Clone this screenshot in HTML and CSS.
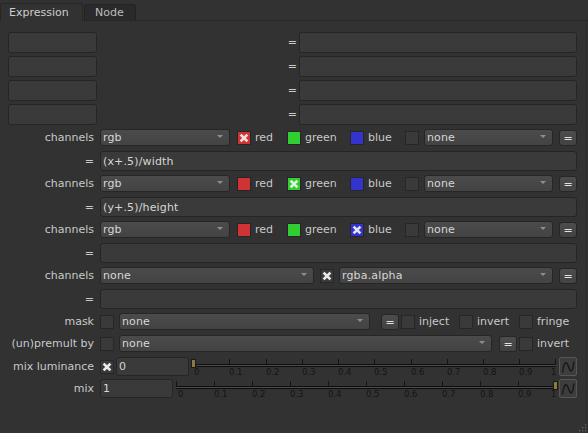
FILE: index.html
```html
<!DOCTYPE html>
<html>
<head>
<meta charset="utf-8">
<link rel="stylesheet" href="styles.css">
</head>
<body>
<div class="tabbar">
  <div class="tab active">Expression</div>
  <div class="tab">Node</div>
</div>
<div class="panel">
  <div class="r4"><div class="fld fs"></div><span class="sp"></span><span class="eq2">=</span><div class="fld fl"></div></div>
  <div class="r4"><div class="fld fs"></div><span class="sp"></span><span class="eq2">=</span><div class="fld fl"></div></div>
  <div class="r4"><div class="fld fs"></div><span class="sp"></span><span class="eq2">=</span><div class="fld fl"></div></div>
  <div class="r4"><div class="fld fs"></div><span class="sp"></span><span class="eq2">=</span><div class="fld fl"></div></div>

  <div class="rc">
    <span class="lbl">channels</span>
    <div class="dd w130">rgb</div>
    <div class="opt ml7 w50"><span class="cb red"><svg viewBox="0 0 12 12"><path d="M2.6 2.6L9.4 9.4M9.4 2.6L2.6 9.4"/></svg></span><span class="t">red</span></div>
    <div class="opt w63"><span class="cb green"></span><span class="t">green</span></div>
    <div class="opt w55"><span class="cb blue"></span><span class="t">blue</span></div>
    <span class="cb"></span>
    <div class="dd ml5 w129">none</div>
    <div class="btn ml6">=</div>
  </div>
  <div class="re"><span class="lbl">=</span><div class="fld grow">(x+.5)/width</div></div>

  <div class="rc">
    <span class="lbl">channels</span>
    <div class="dd w130">rgb</div>
    <div class="opt ml7 w50"><span class="cb red"></span><span class="t">red</span></div>
    <div class="opt w63"><span class="cb green"><svg viewBox="0 0 12 12"><path d="M2.6 2.6L9.4 9.4M9.4 2.6L2.6 9.4"/></svg></span><span class="t">green</span></div>
    <div class="opt w55"><span class="cb blue"></span><span class="t">blue</span></div>
    <span class="cb"></span>
    <div class="dd ml5 w129">none</div>
    <div class="btn ml6">=</div>
  </div>
  <div class="re"><span class="lbl">=</span><div class="fld grow">(y+.5)/height</div></div>

  <div class="rc">
    <span class="lbl">channels</span>
    <div class="dd w130">rgb</div>
    <div class="opt ml7 w50"><span class="cb red"></span><span class="t">red</span></div>
    <div class="opt w63"><span class="cb green"></span><span class="t">green</span></div>
    <div class="opt w55"><span class="cb blue"><svg viewBox="0 0 12 12"><path d="M2.6 2.6L9.4 9.4M9.4 2.6L2.6 9.4"/></svg></span><span class="t">blue</span></div>
    <span class="cb"></span>
    <div class="dd ml5 w129">none</div>
    <div class="btn ml6">=</div>
  </div>
  <div class="re"><span class="lbl">=</span><div class="fld grow"></div></div>

  <div class="rc">
    <span class="lbl">channels</span>
    <div class="dd w214">none</div>
    <span class="cb ml6"><svg viewBox="0 0 12 12"><path d="M2.6 2.6L9.4 9.4M9.4 2.6L2.6 9.4"/></svg></span>
    <div class="dd ml5 w214">rgba.alpha</div>
    <div class="btn ml6">=</div>
  </div>
  <div class="re"><span class="lbl">=</span><div class="fld grow"></div></div>

  <div class="rc">
    <span class="lbl">mask</span>
    <span class="cb"></span>
    <div class="dd ml5 w251">none</div>
    <div class="btn ml11">=</div>
    <div class="opt ml2 w58"><span class="cb"></span><span class="t">inject</span></div>
    <div class="opt w60"><span class="cb"></span><span class="t">invert</span></div>
    <div class="opt"><span class="cb"></span><span class="t">fringe</span></div>
  </div>

  <div class="rc">
    <span class="lbl">(un)premult by</span>
    <span class="cb"></span>
    <div class="dd ml5 w373">none</div>
    <div class="btn ml7">=</div>
    <div class="opt ml2"><span class="cb"></span><span class="t">invert</span></div>
  </div>

  <div class="rm">
    <span class="lbl">mix luminance</span>
    <span class="cb"><svg viewBox="0 0 12 12"><path d="M2.6 2.6L9.4 9.4M9.4 2.6L2.6 9.4"/></svg></span>
    <div class="fld num ml2">0</div>
    <div class="sl w370">
      <div class="trk" style="left:4px;width:363px"></div>
      <span class="tk" style="left:40px"></span><span class="tk" style="left:77px"></span><span class="tk" style="left:113px"></span><span class="tk" style="left:149px"></span><span class="tk" style="left:185px"></span><span class="tk" style="left:222px"></span><span class="tk" style="left:258px"></span><span class="tk" style="left:294px"></span><span class="tk" style="left:330px"></span><span class="tk" style="left:366px"></span>
      <span class="tl" style="left:5px">0</span><span class="tl" style="left:40px">0.1</span><span class="tl" style="left:77px">0.2</span><span class="tl" style="left:113px">0.3</span><span class="tl" style="left:149px">0.4</span><span class="tl" style="left:185px">0.5</span><span class="tl" style="left:222px">0.6</span><span class="tl" style="left:258px">0.7</span><span class="tl" style="left:294px">0.8</span><span class="tl" style="left:330px">0.9</span><span class="tl" style="left:362px">1</span>
      <span class="hd" style="left:2px"></span>
    </div>
    <div class="cv"><svg viewBox="0 0 16 17"><path d="M2.5 14.5C3.5 7 5 3 7 5.5C8.2 7 8.8 10 10 12C11.5 14.5 13 12 13.8 3.5"/></svg></div>
  </div>

  <div class="rm">
    <span class="lbl">mix</span>
    <div class="fld num">1</div>
    <div class="sl w386">
      <div class="trk" style="left:3px;width:381px"></div>
      <span class="tk" style="left:3px"></span><span class="tk" style="left:41px"></span><span class="tk" style="left:79px"></span><span class="tk" style="left:117px"></span><span class="tk" style="left:155px"></span><span class="tk" style="left:193px"></span><span class="tk" style="left:231px"></span><span class="tk" style="left:269px"></span><span class="tk" style="left:307px"></span><span class="tk" style="left:345px"></span>
      <span class="tl" style="left:5px">0</span><span class="tl" style="left:41px">0.1</span><span class="tl" style="left:79px">0.2</span><span class="tl" style="left:117px">0.3</span><span class="tl" style="left:155px">0.4</span><span class="tl" style="left:193px">0.5</span><span class="tl" style="left:231px">0.6</span><span class="tl" style="left:269px">0.7</span><span class="tl" style="left:307px">0.8</span><span class="tl" style="left:345px">0.9</span><span class="tl" style="left:378px">1</span>
      <span class="hd" style="left:380px"></span>
    </div>
    <div class="cv"><svg viewBox="0 0 16 17"><path d="M2.5 14.5C3.5 7 5 3 7 5.5C8.2 7 8.8 10 10 12C11.5 14.5 13 12 13.8 3.5"/></svg></div>
  </div>
</div>
<svg class="grip" viewBox="0 0 8 8"><rect x="6" y="0" width="1.4" height="1.4"/><rect x="6" y="3" width="1.4" height="1.4"/><rect x="3" y="3" width="1.4" height="1.4"/><rect x="6" y="6" width="1.4" height="1.4"/><rect x="3" y="6" width="1.4" height="1.4"/><rect x="0" y="6" width="1.4" height="1.4"/></svg>
</body>
</html>
```
FILE: styles.css
```css
* { box-sizing: border-box; }
html, body { margin: 0; padding: 0; }
body {
  width: 588px;
  height: 433px;
  overflow: hidden;
  position: relative;
  background: #323232;
  font-family: "DejaVu Sans", "Liberation Sans", sans-serif;
  font-size: 11px;
  color: #c9c9c9;
}

.tabbar {
  height: 21px;
  display: flex;
  align-items: flex-end;
  border-bottom: 1px solid #272727;
  background: #323232;
}
.tab {
  height: 16px;
  width: 52px;
  margin-left: 1px;
  padding: 1px 0 0 10px;
  line-height: 14px;
  background: #2a2a2a;
  border: 1px solid #232323;
  border-bottom: none;
  border-radius: 3px 3px 0 0;
  color: #bcbcbc;
  white-space: nowrap;
}
.tab.active {
  width: 83px;
  height: 18px;
  margin: 0 0 -1px 0;
  padding: 0 0 0 8px;
  line-height: 17px;
  background: #323232;
  border-color: #262626;
  color: #cdcdcd;
}

.panel {
  width: 587px;
  height: 412px;
  border-right: 1px solid #2a2a2a;
  padding: 9px 9px 0 8px;
  display: flex;
  flex-direction: column;
}

.r4 { display: flex; height: 21px; margin: 2px 0 1px; flex: none; }
.rc { display: flex; align-items: center; height: 17px; margin: 3px 0 2px; flex: none; }
.re { display: flex; align-items: center; height: 20px; margin: 3px 0 1px; flex: none; }
.rm { display: flex; align-items: center; height: 19px; margin: 3px 0 0; flex: none; }

.lbl {
  width: 86px;
  margin-right: 6px;
  text-align: right;
  white-space: nowrap;
  flex: none;
}

.fld {
  background: #3a3a3a;
  border: 1px solid #252525;
  border-radius: 3px;
  color: #d6d6d6;
  padding-left: 2px;
  display: flex;
  align-items: center;
  white-space: nowrap;
  flex: none;
  letter-spacing: 0.15px;
}
.fs { width: 89px; height: 21px; }
.fl { width: 278px; height: 21px; }
.grow { flex: 1; height: 20px; }
.num { width: 73px; height: 19px; }
.sp { flex: 1; }
.eq2 { align-self: center; margin-right: 2px; }

.dd {
  height: 17px;
  display: flex;
  align-items: center;
  padding-left: 2px;
  border: 1px solid #262626;
  border-radius: 3px;
  background: linear-gradient(#4b4b4b, #434343);
  color: #d6d6d6;
  white-space: nowrap;
  flex: none;
  letter-spacing: 0.15px;
}
.dd::after {
  content: "";
  margin-left: auto;
  margin-right: 6px;
  margin-top: -2px;
  border-left: 3px solid transparent;
  border-right: 3px solid transparent;
  border-top: 3px solid #8e8e8e;
}

.btn {
  width: 18px;
  height: 16px;
  border: 1px solid #262626;
  border-radius: 3px;
  background: linear-gradient(#4d4d4d, #424242);
  color: #e2e2e2;
  display: flex;
  align-items: center;
  justify-content: center;
  line-height: 1;
  padding-top: 1px;
  flex: none;
}

.cb {
  width: 14px;
  height: 14px;
  border: 1px solid #262626;
  background: #3a3a3a;
  flex: none;
  display: block;
}
.cb svg { display: block; width: 12px; height: 12px; }
.cb path { stroke: #e9e9e9; stroke-width: 2.7; fill: none; }
.cb.red { background: #cf3333; }
.cb.green { background: #32cd32; }
.cb.blue { background: #3434cc; }
.cb.red path { stroke: #f0dede; }
.cb.green path { stroke: #dff3df; }
.cb.blue path { stroke: #e2e2f6; }

.opt { display: flex; align-items: center; flex: none; white-space: nowrap; }
.opt .t { margin-left: 4px; }

.w50 { width: 50px; }
.w55 { width: 55px; }
.w58 { width: 58px; }
.w60 { width: 60px; }
.w63 { width: 63px; }
.w129 { width: 129px; }
.w130 { width: 130px; }
.w214 { width: 214px; }
.w251 { width: 251px; }
.w373 { width: 373px; }
.w370 { width: 370px; }
.w386 { width: 386px; }
.ml2 { margin-left: 2px; }
.ml5 { margin-left: 5px; }
.ml6 { margin-left: 6px; }
.ml7 { margin-left: 7px; }
.ml11 { margin-left: 11px; }

.sl { position: relative; height: 19px; flex: none; }
.trk {
  position: absolute;
  top: 7px;
  height: 3px;
  border-top: 1px solid #0e0e0e;
  border-bottom: 1px solid #0e0e0e;
  background: #4c4c4c;
}
.tk {
  position: absolute;
  top: 2px;
  width: 1px;
  height: 5px;
  background: #141414;
}
.tl {
  position: absolute;
  top: 10px;
  font-size: 8.5px;
  line-height: 10px;
  color: #141414;
  white-space: nowrap;
}
.hd {
  position: absolute;
  top: 2px;
  width: 5px;
  height: 9px;
  background: #8d7b3d;
  border: 1px solid #1a1a1a;
}

.cv {
  width: 18px;
  height: 19px;
  border: 1px solid #565656;
  border-radius: 2px;
  background: #3d3d3d;
  flex: none;
  margin-top: -1px;
}
.cv svg { display: block; width: 16px; height: 17px; }
.cv path { stroke: #1a1a1a; stroke-width: 1.5; fill: none; }

.grip {
  position: absolute;
  right: 1px;
  bottom: 1px;
  width: 8px;
  height: 8px;
  fill: #5c5c5c;
}
```
